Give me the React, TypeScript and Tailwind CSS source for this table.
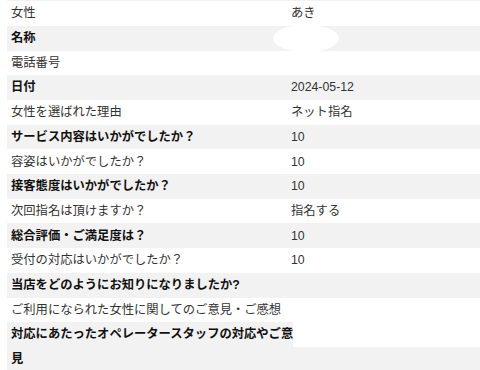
import React from 'react';

type Row = { label: string; value?: string; hidden?: boolean };

const rows: Row[] = [
    { label: '女性', value: 'あき' },
    { label: '名称', hidden: true },
    { label: '電話番号' },
    { label: '日付', value: '2024-05-12' },
    { label: '女性を選ばれた理由', value: 'ネット指名' },
    { label: 'サービス内容はいかがでしたか？', value: '10' },
    { label: '容姿はいかがでしたか？', value: '10' },
    { label: '接客態度はいかがでしたか？', value: '10' },
    { label: '次回指名は頂けますか？', value: '指名する' },
    { label: '総合評価・ご満足度は？', value: '10' },
    { label: '受付の対応はいかがでしたか？', value: '10' },
    { label: '当店をどのようにお知りになりましたか?' },
    { label: 'ご利用になられた女性に関してのご意見・ご感想' },
];

export default function App() {
    return (
        <div
            className="w-[480px] h-[370px] overflow-hidden bg-white pl-[7px] text-[12.3px] text-[#333]"
            style={{ fontFamily: '"Liberation Sans", Arial, "Noto Sans CJK JP", sans-serif' }}
        >
            {/* bottom edge of the row above */}
            <div className="h-[1.3px] bg-[#f2f2f2]" />

            {rows.map((row, i) => {
                const shaded = i % 2 === 1;
                return (
                    <div
                        key={i}
                        className={`grid grid-cols-[280px_1fr] h-[24.7px] items-center whitespace-nowrap ${shaded ? 'bg-[#f2f2f2]' : 'bg-white'}`}
                    >
                        <div className={`pl-1 ${shaded ? 'font-bold text-[#111]' : ''}`}>{row.label}</div>
                        <div className="relative pl-1">
                            {row.value}
                            {row.hidden && (
                                <span className="absolute left-[-14px] top-[-13px] w-[66px] h-[27px] rounded-[50%] bg-white" />
                            )}
                        </div>
                    </div>
                );
            })}

            {/* long label wraps out of its cell */}
            <div className="h-[24.7px] flex items-center">
                <div className="h-full flex items-center bg-[#f2f2f2] pl-1 font-bold text-[#111] whitespace-nowrap">
                    対応にあたったオペレータースタッフの対応やご意
                </div>
            </div>
            <div className="h-[30px] pt-[3px] bg-[#f2f2f2] pl-1 font-bold text-[#111]">見</div>
        </div>
    );
}
